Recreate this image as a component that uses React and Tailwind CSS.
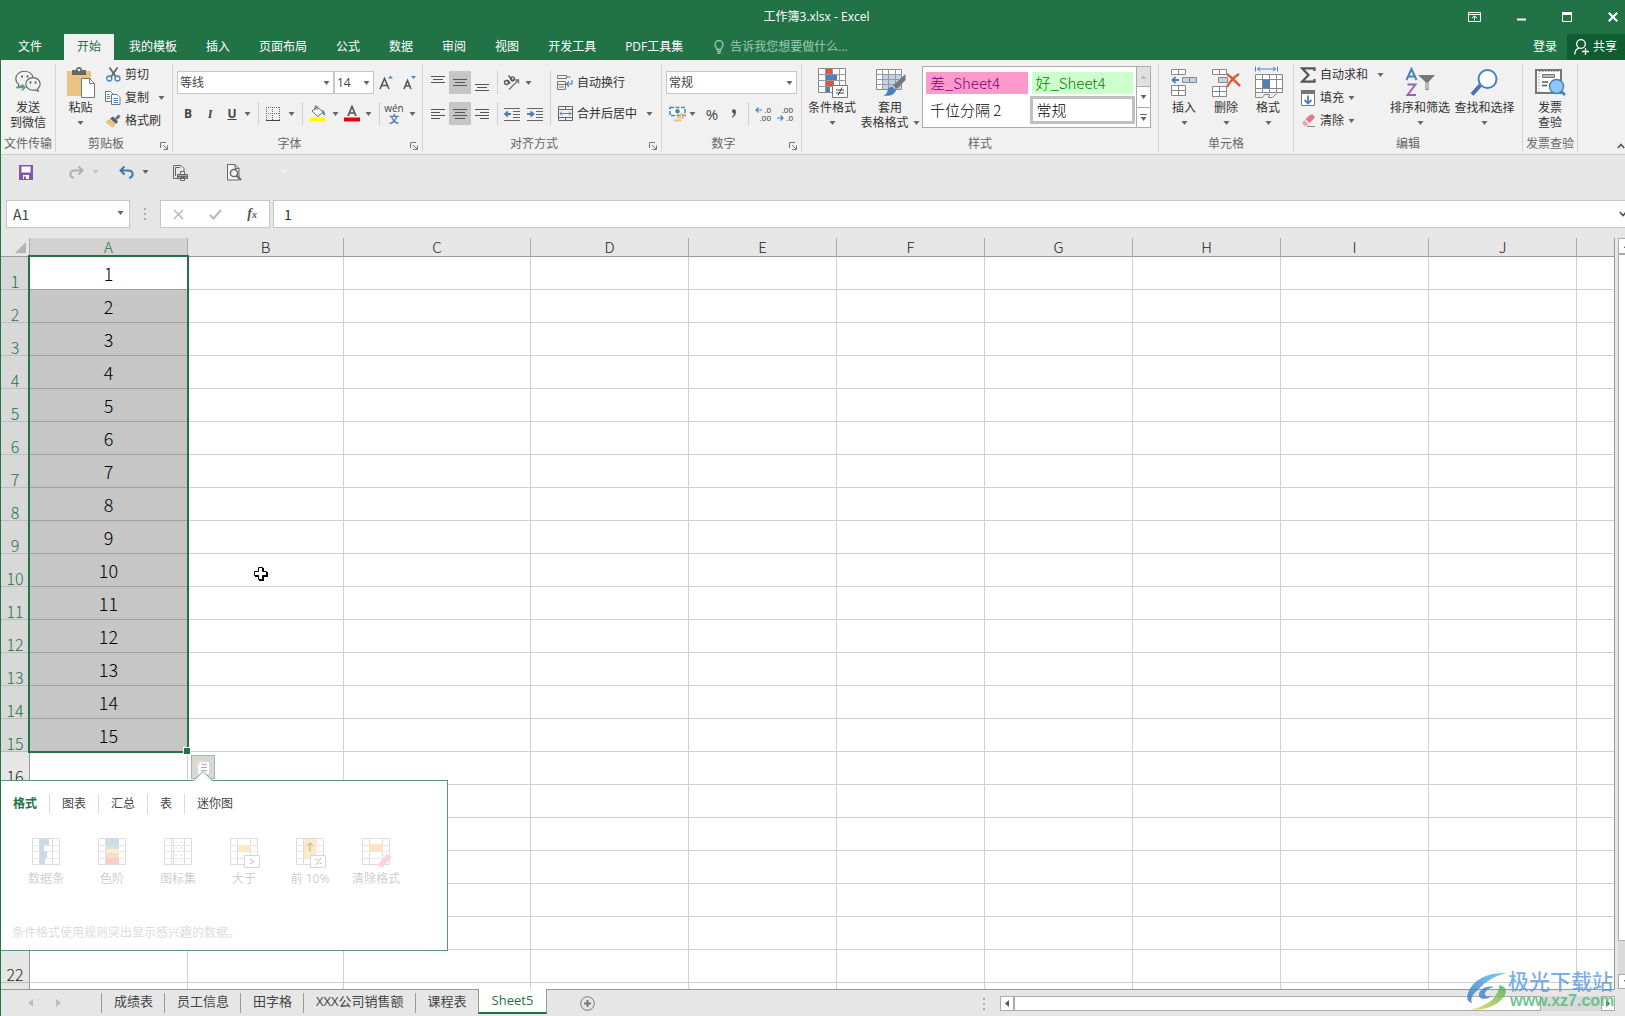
import React, { useState } from "react";

// ---------- DATA ----------

const MENU_TABS = ["我的模板", "插入", "页面布局", "公式", "数据", "审阅", "视图", "开发工具", "PDF工具集"];
const COLUMNS = [
  { name: "A", width: 158 },
  { name: "B", width: 156 },
  { name: "C", width: 187 },
  { name: "D", width: 158 },
  { name: "E", width: 148 },
  { name: "F", width: 148 },
  { name: "G", width: 148 },
  { name: "H", width: 148 },
  { name: "I", width: 148 },
  { name: "J", width: 148 },
  { name: "", width: null },
];
const ROWS = Array.from({ length: 23 }, (_, i) => i + 1);
const FILLED = 15;
const SHEETS = ["成绩表", "员工信息", "田字格", "XXX公司销售额", "课程表"];
const ANALYSIS_TABS = ["格式", "图表", "汇总", "表", "迷你图"];

// ---------- SMALL PARTS ----------

const Caret = ({ className = "" }) => (
  <svg width="7" height="4" viewBox="0 0 7 4" className={`shrink-0 ${className}`}>
    <path d="M0.5 0h6L3.5 4z" fill="currentColor" />
  </svg>
);

const Sep = () => <span className="h-[23px] w-px shrink-0 bg-[#d0d0d0]" />;

const Launcher = () => (
  <button aria-label="更多选项" className="flex h-4 w-4 items-center justify-center pt-1">
    <svg width="8" height="8" viewBox="0 0 8 8" fill="none" stroke="#777">
      <path d="M0.5 6V0.5H6M3 3l4 4M7.5 3.5v4h-4" />
    </svg>
  </button>
);

const Group = ({ label, width, launcher, children }) => (
  <section className={`flex shrink-0 flex-col border-r border-[#d4d4d4] ${width}`}>
    <div className="flex h-[72px] items-start">{children}</div>
    <div className="flex h-4 items-center">
      <span className="flex-1 text-center whitespace-nowrap text-[#666]">{label}</span>
      {launcher && <Launcher />}
    </div>
  </section>
);

const BigButton = ({ icon, lines, caret, width }) => (
  <button className={`flex shrink-0 flex-col items-center pt-[2px] leading-[15px] ${width}`}>
    <span className="mb-[2px] flex h-8 items-center justify-center">{icon}</span>
    <span className="whitespace-nowrap">{lines[0]}</span>
    <span className="flex h-[15px] items-center gap-1 whitespace-nowrap">
      {lines[1]}
      {caret && <Caret className="text-[#666]" />}
    </span>
  </button>
);

const SmallButton = ({ icon, label, caret, caretGap = "ml-1" }) => (
  <button className="flex h-[23px] items-center whitespace-nowrap">
    <span className="mr-1 flex w-4 justify-center">{icon}</span>
    {label}
    {caret && <Caret className={`text-[#666] ${caretGap}`} />}
  </button>
);

const Tool = ({ label, width = "w-[22px]", active, children }) => (
  <button
    aria-label={label}
    className={`flex h-[23px] shrink-0 items-center justify-center ${width} ${active ? "bg-[#c6c6c6]" : ""}`}
  >
    {children}
  </button>
);

const DropTool = ({ label }) => (
  <button aria-label={label} className="flex h-[23px] w-[9px] shrink-0 items-center justify-center text-[#666]">
    <Caret />
  </button>
);

const Picker = ({ label, value, width }) => (
  <label className={`relative block h-[23px] ${width}`}>
    <select
      aria-label={label}
      className="h-full w-full appearance-none border border-[#c6c6c6] bg-white px-[2px] text-[#444] outline-none"
    >
      <option>{value}</option>
    </select>
    <Caret className="pointer-events-none absolute top-[10px] right-1 text-[#666]" />
  </label>
);

// ---------- ICONS ----------

const WeChatIcon = () => (
  <svg width="26" height="24" viewBox="0 0 26 24" fill="none" stroke="#666" strokeWidth="1.1">
    <path d="M10 16.500c-1.500 0-2.500-.2-3.800-.6L3 17.500l.8-3C1.800 13 .8 11 .8 8.800.8 4.400 4.800 1.200 9.500 1.200c4.300 0 7.800 2.600 8.500 6.300" />
    <path d="M18 7.600c4 0 7.200 2.900 7.200 6.400 0 2-1 3.700-2.700 4.900l.6 2.400-2.700-1.400c-.8.200-1.600.3-2.400.3-4 0-7.200-2.800-7.200-6.200S14 7.600 18 7.600z" />
    <path d="M7 5.500v2M12.500 5.500v2M15.500 11.500v2M20.500 11.500v2" stroke="#444" strokeWidth="1.600" />
    <path d="M1 17.500h8.500M7 14.500l3 3-3 3" stroke="#4fa877" strokeWidth="1.400" />
  </svg>
);

const PasteIcon = () => (
  <svg width="30" height="32" viewBox="0 0 30 32">
    <path d="M1 5h24v25H1z" fill="#eac282" />
    <path d="M6 4h4c0-4 6-4 6 0h4v5H6z" fill="#666" />
    <circle cx="13" cy="4" r="1.300" fill="#f1f1f1" />
    <path d="M15.500 12.500h8l5 5v14h-13z" fill="#fff" stroke="#777" />
    <path d="M23.500 12.500v5h5" fill="none" stroke="#777" />
  </svg>
);

const CutIcon = () => (
  <svg width="15" height="15" viewBox="0 0 15 15" fill="none">
    <path d="M3.500 0.500L10 10M11.500 0.500L5 10" stroke="#666" strokeWidth="1.800" />
    <circle cx="3.300" cy="11.500" r="2.500" stroke="#4a80bd" strokeWidth="1.300" />
    <circle cx="11.500" cy="11.500" r="2.500" stroke="#4a80bd" strokeWidth="1.300" />
  </svg>
);

const CopyIcon = () => (
  <svg width="16" height="14" viewBox="0 0 16 14" fill="#fff" stroke="#777">
    <path d="M0.500 0.500h5l2.500 2.500v7.500h-7.500z" />
    <path d="M6.500 3.500h5.500l3 3v7h-8.500z" />
    <path d="M2 3.500h2.500M2 5.500h3M2 7.500h3M8.500 7.500h4.500M8.500 9.500h4.500M8.500 11.500h4.500" stroke="#4a80bd" />
  </svg>
);

const BrushIcon = () => (
  <svg width="16" height="14" viewBox="0 0 16 14">
    <path d="M0.500 7.500l4-2.500 6 5-2.500 3.500-2.500-1-.5-1.500-1 .5z" fill="#eac282" />
    <path d="M5 4.500l3-2 5 5-2 2.500z" fill="#5c5c6b" />
    <path d="M10 4l3.500-3.500 2 2L12 6z" fill="#6b6b78" />
  </svg>
);

const GrowIcon = ({ down }) => (
  <svg width="16" height="16" viewBox="0 0 16 16">
    <path d={down ? "M2 14L5.500 5.500 9 14M3 11h5" : "M1 14L5.500 3.500 10 14M2.500 10.500h6"} fill="none" stroke="#555" strokeWidth="1.600" />
    <path d={down ? "M9 1h5l-2.500 3z" : "M9 3.500h5L11.500 0.800z"} fill="#4a80bd" />
  </svg>
);

const BorderIcon = () => (
  <svg width="14" height="14" viewBox="0 0 14 14" fill="none" stroke="#666">
    <path d="M0 0.500h14M0 6.500h14M0.500 0v13M6.500 0v13M13.500 0v13" strokeDasharray="1 1" />
    <path d="M0 13.500h14" stroke="#444" />
  </svg>
);

const FillIcon = () => (
  <svg width="17" height="17" viewBox="0 0 17 17">
    <path d="M3 6l5-4 6 5-5 4.500z" fill="#fff" stroke="#666" />
    <path d="M6 5V1.500c0-1 2-1 2 0V5" fill="none" stroke="#666" />
    <path d="M13 5c3 1 3.500 4 2.500 6-1-1-1.500-2.500-2.500-3z" fill="#4a80bd" />
    <path d="M0.500 12.500h16v4h-16z" fill="#ff0" />
  </svg>
);

const FontColorIcon = () => (
  <svg width="16" height="17" viewBox="0 0 16 17">
    <path d="M4 11L8 1.500 12 11M5.200 8h5.600" fill="none" stroke="#555" strokeWidth="1.700" />
    <path d="M0 12.500h16v4H0z" fill="#e3000f" />
  </svg>
);

const LinesIcon = ({ rows }) => (
  <svg width="14" height="16" viewBox="0 0 14 16" stroke="#555">
    {rows.map(([x, y, w]) => (
      <path key={y} d={`M${x} ${y}.5h${w}`} />
    ))}
  </svg>
);

const OrientIcon = () => (
  <svg width="17" height="16" viewBox="0 0 17 16" fill="none" stroke="#555">
    <path d="M6 14.500L15.500 5M12 5h3.500v3.500" stroke="#777" strokeWidth="1.300" />
    <circle cx="3.500" cy="7.500" r="2" strokeWidth="1.400" />
    <path d="M4.300 5l3 3.500M5.500 0.500l4.500 5.500" strokeWidth="1.400" />
    <circle cx="9.500" cy="3.800" r="1.900" strokeWidth="1.400" />
  </svg>
);

const IndentIcon = ({ right }) => (
  <svg width="17" height="14" viewBox="0 0 17 14" fill="none" stroke="#666">
    <path d="M0 1.500h16M9 4.500h7M9 7.500h7M9 10.500h7M0 13.500h16" />
    <path d={right ? "M0 7h5M3.500 4.500L6.500 7 3.500 9.500" : "M2 7h5M4 4.500L1 7l3 2.500"} stroke="#4a80bd" strokeWidth="1.800" />
  </svg>
);

const WrapIcon = () => (
  <svg width="16" height="16" viewBox="0 0 16 16" fill="none" stroke="#777">
    <path d="M0.500 0.500h9v3h-9zM0.500 6.500h8v3h-8zM0.500 9.500h8v5h-8zM2 12h5M9.500 2h4" />
    <path d="M15 5v4H10M12 6.500L9.500 9l2.500 2.500" stroke="#4a80bd" strokeWidth="1.200" />
  </svg>
);

const MergeIcon = () => (
  <svg width="15" height="15" viewBox="0 0 15 15" fill="none" stroke="#666">
    <path d="M0.500 0.500h14v14h-14zM0.500 3.500h14M0.500 11.500h14M7.500 0.500v3M7.500 11.500v3" />
    <path d="M2 7.500h11M4 5.500l-2 2 2 2M11 5.500l2 2-2 2" stroke="#4a80bd" />
  </svg>
);

const MoneyIcon = () => (
  <svg width="17" height="16" viewBox="0 0 17 16">
    <path d="M1 1.500h15v8H1z" fill="#fff" stroke="#4a80bd" strokeWidth="1.500" strokeDasharray="4 1.500" />
    <circle cx="8.500" cy="5.300" r="2.200" fill="#4a80bd" />
    <path d="M9 7.500h7v2H9zM8 10.500h7v2H8zM5 13.500h7v2H5z" fill="#f0c075" />
  </svg>
);

const CommaIcon = () => (
  <svg width="6" height="9" viewBox="0 0 6 9">
    <path d="M1 1.800C1 .8 1.900.2 2.900.2 4.200.2 5 1.200 5 2.800 5 5.500 3.500 7.800 1 8.800L.7 8C2 7.200 2.800 6 2.900 4.500 1.800 4.500 1 3 1 1.800z" fill="#555" />
  </svg>
);

const DecimalIcon = ({ less }) => (
  <span className="relative block h-4 w-4 text-[8px] leading-[8px] text-[#333]">
    <span className="block text-right">{less ? ".00" : ".0"}</span>
    <span className="block text-right">{less ? ".0" : ".00"}</span>
    <svg width="7" height="6" viewBox="0 0 7 6" fill="none" stroke="#4a80bd" strokeWidth="1.200" className={`absolute left-0 ${less ? "bottom-px" : "top-px"}`}>
      <path d={less ? "M0 3h6M3.500 0.500L6 3 3.500 5.500" : "M7 3H1M3.500 0.500L1 3l2.500 2.500"} />
    </svg>
  </span>
);

const CondIcon = () => (
  <svg width="31" height="31" viewBox="0 0 31 31">
    <path d="M1.500 1.500h27v24h-27z" fill="#fff" stroke="#888" />
    <path d="M1.500 7.500h27M1.500 13.500h27M1.500 19.500h27M8.500 1.500v24M15.500 1.500v24M22.500 1.500v24" stroke="#999" fill="none" />
    <path d="M9 2h6v5H9zM9 14h8v5H9z" fill="#d9593a" />
    <path d="M9 8h11v5H9zM9 20h4v5H9z" fill="#4a80bd" />
    <path d="M15.500 18.500h15v12h-15z" fill="#fff" stroke="#777" />
    <path d="M19 23h8M19 26h8M25 20.500l-4 8" stroke="#444" fill="none" />
  </svg>
);

const TableStyleIcon = () => (
  <svg width="31" height="30" viewBox="0 0 31 30">
    <path d="M1.500 2.500h25v20h-25z" fill="#fff" stroke="#888" />
    <path d="M8 8h18v14H8z" fill="#bcd3ea" />
    <path d="M1.500 7.500h25M1.500 12.500h25M1.500 17.500h25M7.500 2.500v20M13.500 2.500v20M20.500 2.500v20" stroke="#999" fill="none" />
    <path d="M30.500 7v6L22 22l-4-3.500z" fill="#777" />
    <path d="M17 19.500l4 3.500c-1 5-7 6.500-12.500 5.500 3-1 3.500-3 4.500-6 1-2 2.500-3 4-3z" fill="#4a80bd" />
  </svg>
);

const InsertIcon = () => (
  <svg width="28" height="28" viewBox="0 0 28 28" fill="#fff" stroke="#888">
    <path d="M1.500 1.500h14v5h-14zM8.500 1.500v5M1.500 17.500h14v10h-14zM1.500 22.500h14M8.500 17.500v10" />
    <path d="M12.500 9.500h14v5h-14zM19.500 9.500v5" fill="#c0d5e4" />
    <path d="M9 12H3M5.500 9L2.500 12l3 3" fill="none" stroke="#4a80bd" strokeWidth="1.800" />
  </svg>
);

const DeleteIcon = () => (
  <svg width="30" height="29" viewBox="0 0 30 29" fill="#fff" stroke="#888">
    <path d="M1.500 1.500h14v5h-14zM8.500 1.500v5M1.500 18.500h14v10h-14zM1.500 23.500h14M8.500 18.500v10" />
    <path d="M7.500 9.500h9v5h-9z" fill="#c0d5e4" />
    <path d="M16 6c4 3 8 7 13 12M28 6c-5 3-9 7-12 13" fill="none" stroke="#d9593a" strokeWidth="2.400" />
  </svg>
);

const FormatIcon = () => (
  <svg width="29" height="32" viewBox="0 0 29 32" fill="none" stroke="#888">
    <path d="M1.500 8.500h27v18h-27z" fill="#fff" />
    <path d="M8.500 8.500v18M15.500 8.500v18M22.500 8.500v18M1.500 13.500h27M1.500 22.500h27M1.500 26.500v5h7l2-3h5l-1 3h4l4-4" />
    <path d="M9 14h7v8H9z" fill="#4a80bd" stroke="none" />
    <path d="M1.500 0.500v5M23.500 0.500v5M3 3h19M6 0.800L3.500 3 6 5.200M19 0.800L21.500 3 19 5.200" stroke="#4a80bd" />
  </svg>
);

const SumIcon = () => (
  <svg width="16" height="16" viewBox="0 0 16 16">
    <path d="M14.500 4V1.300H2l6.500 6.700L2 14.700h12.500V12" fill="none" stroke="#555" strokeWidth="2.200" />
  </svg>
);

const FillDownIcon = () => (
  <svg width="14" height="16" viewBox="0 0 14 16">
    <path d="M0.500 0.500h13v15H0.500z" fill="#fff" stroke="#777" />
    <path d="M0 0h14v4H0z" fill="#777" />
    <path d="M7 5.500v8M3.500 10L7 13.500 10.500 10" fill="none" stroke="#4a80bd" strokeWidth="1.800" />
  </svg>
);

const EraserIcon = () => (
  <svg width="15" height="13" viewBox="0 0 15 13">
    <path d="M1 8.500l2.500-2.500 4 4L5.500 12H3z" fill="#eba6ae" />
    <path d="M4.500 5L9.500 0.500h2l2 2v1.500L8.500 9z" fill="#e8768a" />
    <path d="M6 12.500h8" stroke="#888" />
  </svg>
);

const SortFilterIcon = () => (
  <svg width="31" height="30" viewBox="0 0 31 30" fill="none">
    <path d="M1.500 13L6.500 2l5 11M3 9.500h7" stroke="#4a80bd" strokeWidth="2" />
    <path d="M2.500 17.500h8L2.500 28h8.500" stroke="#9561b5" strokeWidth="1.900" />
    <path d="M13 8h17l-6.500 7v8h-3v-8z" fill="#777" />
    <path d="M21.500 15.500h1v6.500h-1z" fill="#fff" />
  </svg>
);

const FindIcon = () => (
  <svg width="30" height="29" viewBox="0 0 30 29">
    <path d="M10.500 17L2 26.500" stroke="#4a70b5" strokeWidth="4" />
    <circle cx="17.500" cy="11" r="9" fill="#fff" stroke="#4a80bd" strokeWidth="2" />
  </svg>
);

const InvoiceIcon = () => (
  <svg width="32" height="28" viewBox="0 0 32 28" fill="none">
    <path d="M2 2h25v23H2z" fill="#fff" stroke="#777" strokeWidth="2" />
    <path d="M5 5v19M5 3.500h20" stroke="#999" strokeDasharray="1.500 1.500" />
    <path d="M8.500 6.500h12v3h-12z" stroke="#777" fill="#bbb" />
    <path d="M8 14h6M8 17.500h5M18 13h4" stroke="#555" strokeWidth="1.300" />
    <circle cx="22.500" cy="18.500" r="7" fill="#8fc6fb" stroke="#4a80bd" strokeWidth="1.500" />
    <path d="M27 23l4 4" stroke="#4a80bd" strokeWidth="2.500" />
  </svg>
);

// ---------- TITLE + MENU ----------

const TitleBar = () => (
  <header className="bg-[#217346] text-white">
    <div className="flex h-[34px] items-center">
      <div className="w-[176px]" />
      <h1 className="flex-1 text-center">工作簿3.xlsx - Excel</h1>
      <div className="flex w-[168px] items-center justify-end gap-9 pr-[7px]">
        <button aria-label="功能区显示选项">
          <svg width="13" height="10" viewBox="0 0 13 10" fill="none" stroke="#fff">
            <path d="M0.500 0.500h12v9h-12zM0.500 2.500h12M6.500 8.500V4M4 6l2.500-2L9 6" />
          </svg>
        </button>
        <button aria-label="最小化">
          <svg width="9" height="10" viewBox="0 0 9 10"><path d="M0 6.500h9v2H0z" fill="#fff" /></svg>
        </button>
        <button aria-label="最大化">
          <svg width="10" height="10" viewBox="0 0 10 10"><path d="M0.500 1v8.500h9V1z" fill="none" stroke="#fff" /><path d="M0 0h10v3H0z" fill="#fff" /></svg>
        </button>
        <button aria-label="关闭">
          <svg width="10" height="10" viewBox="0 0 10 10"><path d="M0.800 0.800l8.400 8.400M9.200 0.800L0.800 9.200" stroke="#fff" strokeWidth="2" /></svg>
        </button>
      </div>
    </div>
    <nav className="flex h-[26px] items-stretch">
      <button className="w-[64px] pr-1 text-center">文件</button>
      <button className="mr-px bg-[#f1f1f1] px-[13px] text-[#217346]">开始</button>
      <div className="flex gap-px">
        {MENU_TABS.map((tab) => (
          <button key={tab} className="px-[14px] whitespace-nowrap">{tab}</button>
        ))}
      </div>
      <label className="ml-[17px] flex flex-1 items-center gap-[6px]">
        <svg width="10" height="14" viewBox="0 0 10 14" fill="none" stroke="#9fcab2" strokeWidth="1.300">
          <path d="M3 9.500C3 8 1 7 1 4.500a4 4 0 018 0C9 7 7 8 7 9.500zM3 11.500h4M3.500 13.300h3" />
        </svg>
        <input
          aria-label="告诉我"
          placeholder="告诉我您想要做什么..."
          className="w-40 bg-transparent text-white outline-none placeholder:text-[#9fcab2]"
        />
      </label>
      <button className="px-[10px]">登录</button>
      <button className="flex items-center gap-1 bg-[#0e5c2f] pr-2 pl-[7px]">
        <svg width="15" height="16" viewBox="0 0 15 16" fill="none" stroke="#fff" strokeWidth="1.300">
          <circle cx="7" cy="5" r="4.300" />
          <path d="M0.800 15.500c0-3.500 2-5.700 4.200-6.500M8 12.500h7M11.500 9v7" />
        </svg>
        共享
      </button>
    </nav>
  </header>
);

// ---------- RIBBON ----------

const Ribbon = () => (
  <div className="flex h-[95px] items-start overflow-hidden border-b border-[#cacaca] bg-[#f1f1f1] pt-1 text-[#333]">
    <Group label="文件传输" width="w-[55px]">
      <BigButton icon={<WeChatIcon />} lines={["发送", "到微信"]} width="w-full" />
    </Group>

    <Group label="剪贴板" width="w-[117px]" launcher>
      <BigButton icon={<PasteIcon />} lines={["粘贴"]} caret width="w-[49px]" />
      <div className="-mt-px flex flex-col items-start">
        <SmallButton icon={<CutIcon />} label="剪切" />
        <SmallButton icon={<CopyIcon />} label="复制" caret caretGap="ml-[9px]" />
        <SmallButton icon={<BrushIcon />} label="格式刷" />
      </div>
    </Group>

    <Group label="字体" width="w-[250px]" launcher>
      <div className="flex flex-col gap-2 pt-[7px] pl-1">
        <div className="flex items-center">
          <Picker label="字体" value="等线" width="w-[157px]" />
          <Picker label="字号" value="14" width="w-10" />
          <Tool label="增大字号" width="w-[26px]"><GrowIcon /></Tool>
          <Tool label="减小字号" width="w-[20px]"><GrowIcon down /></Tool>
        </div>
        <div className="flex items-center text-[#444]">
          <Tool label="加粗"><b>B</b></Tool>
          <Tool label="倾斜"><b className="font-serif italic">I</b></Tool>
          <Tool label="下划线"><b className="underline">U</b></Tool>
          <DropTool label="下划线样式" />
          <span className="w-[6px]" /><Sep />
          <Tool label="边框" width="w-[28px]"><BorderIcon /></Tool>
          <DropTool label="边框样式" />
          <span className="w-[6px]" /><Sep />
          <Tool label="填充颜色" width="w-[28px]"><FillIcon /></Tool>
          <DropTool label="填充颜色列表" />
          <Tool label="字体颜色" width="w-6"><FontColorIcon /></Tool>
          <DropTool label="字体颜色列表" />
          <span className="w-[6px]" /><Sep />
          <Tool label="拼音" width="w-[28px]">
            <span className="flex flex-col items-center">
              <span className="text-[10px] leading-[11px]">wén</span>
              <span className="text-[10px] leading-[11px] font-bold text-[#4a80bd]">文</span>
            </span>
          </Tool>
          <DropTool label="拼音选项" />
        </div>
      </div>
    </Group>

    <Group label="对齐方式" width="w-[239px]" launcher>
      <div className="flex pt-[7px] pl-1">
        <div className="flex flex-col gap-2">
          <div className="flex">
            <Tool label="顶端对齐"><LinesIcon rows={[[0, 1, 14], [2, 4, 10], [0, 7, 14]]} /></Tool>
            <Tool label="垂直居中" active><LinesIcon rows={[[0, 4, 14], [2, 7, 10], [0, 10, 14]]} /></Tool>
            <Tool label="底端对齐"><LinesIcon rows={[[0, 9, 14], [2, 12, 10], [0, 15, 14]]} /></Tool>
            <span className="w-1" /><Sep />
            <Tool label="方向" width="w-[26px]"><OrientIcon /></Tool>
            <DropTool label="方向选项" />
          </div>
          <div className="flex">
            <Tool label="左对齐"><LinesIcon rows={[[0, 3, 14], [0, 6, 9], [0, 9, 14], [0, 12, 9]]} /></Tool>
            <Tool label="居中" active><LinesIcon rows={[[0, 3, 14], [2, 6, 10], [0, 9, 14], [2, 12, 10]]} /></Tool>
            <Tool label="右对齐"><LinesIcon rows={[[0, 3, 14], [5, 6, 9], [0, 9, 14], [5, 12, 9]]} /></Tool>
            <span className="w-1" /><Sep />
            <Tool label="减少缩进量" width="w-[28px]"><IndentIcon /></Tool>
            <Tool label="增加缩进量" width="w-[18px]"><IndentIcon right /></Tool>
          </div>
        </div>
        <div className="ml-[6px] flex flex-col gap-2 border-l border-[#d0d0d0] pl-[6px]">
          <SmallButton icon={<WrapIcon />} label="自动换行" />
          <SmallButton icon={<MergeIcon />} label="合并后居中" caret caretGap="ml-[9px]" />
        </div>
      </div>
    </Group>

    <Group label="数字" width="w-[140px]" launcher>
      <div className="flex flex-col gap-2 pt-[7px] pl-1">
        <Picker label="数字格式" value="常规" width="w-[131px]" />
        <div className="flex text-[#444]">
          <Tool label="会计数字格式"><MoneyIcon /></Tool>
          <DropTool label="会计数字格式选项" />
          <span className="w-1" />
          <Tool label="百分比样式"><span className="text-[15px]">%</span></Tool>
          <Tool label="千位分隔样式"><CommaIcon /></Tool>
          <span className="w-[3px]" /><Sep />
          <Tool label="增加小数位数" width="w-[28px]"><DecimalIcon /></Tool>
          <Tool label="减少小数位数" width="w-4"><DecimalIcon less /></Tool>
        </div>
      </div>
    </Group>

    <Group label="样式" width="w-[357px]">
      <BigButton icon={<CondIcon />} lines={["条件格式"]} caret width="w-[60px]" />
      <BigButton icon={<TableStyleIcon />} lines={["套用", "表格格式"]} caret width="w-[56px]" />
      <div className="mt-[2px] ml-1 flex h-[62px] border border-[#ababab] bg-white text-[15px] leading-[22px] font-light [font-family:'Noto_Sans_CJK_SC',sans-serif]">
        <div className="grid w-[213px] grid-cols-2 content-center px-px">
          <button className="m-[2px] bg-[#ff99cc] px-1 text-left text-[#800080]">差_Sheet4</button>
          <button className="m-[2px] bg-[#ccffcc] px-1 text-left text-[#008000]">好_Sheet4</button>
          <button className="px-[6px] text-left text-black">千位分隔 2</button>
          <button className="border-[3px] border-[#c0c0c0] px-1 text-left text-black">常规</button>
        </div>
        <div className="flex w-[14px] flex-col divide-y divide-[#ababab] border-l border-[#ababab] text-[#666]">
          <button aria-label="上一行" className="flex flex-1 items-center justify-center bg-[#e1e1e1] text-[#bbb]"><Caret className="rotate-180" /></button>
          <button aria-label="下一行" className="flex flex-1 items-center justify-center"><Caret /></button>
          <button aria-label="其他样式" className="flex flex-1 flex-col items-center justify-center gap-[2px]">
            <span className="h-px w-[7px] bg-[#666]" />
            <Caret />
          </button>
        </div>
      </div>
    </Group>

    <Group label="单元格" width="w-[135px]">
      <div className="flex pl-1">
        <BigButton icon={<InsertIcon />} lines={["插入"]} caret width="w-[42px]" />
        <BigButton icon={<DeleteIcon />} lines={["删除"]} caret width="w-[42px]" />
        <BigButton icon={<FormatIcon />} lines={["格式"]} caret width="w-[42px]" />
      </div>
    </Group>

    <Group label="编辑" width="w-[229px]">
      <div className="-mt-px flex w-[94px] flex-col items-start pl-[6px]">
        <SmallButton icon={<SumIcon />} label="自动求和" caret caretGap="ml-[9px]" />
        <SmallButton icon={<FillDownIcon />} label="填充" caret />
        <SmallButton icon={<EraserIcon />} label="清除" caret />
      </div>
      <BigButton icon={<SortFilterIcon />} lines={["排序和筛选"]} caret width="w-[64px]" />
      <BigButton icon={<FindIcon />} lines={["查找和选择"]} caret width="w-[65px]" />
    </Group>

    <Group label="发票查验" width="w-[55px]">
      <BigButton icon={<InvoiceIcon />} lines={["发票", "查验"]} width="w-full" />
    </Group>

    <button aria-label="折叠功能区" className="ml-auto self-end pb-[5px]">
      <svg width="8" height="6" viewBox="0 0 8 6" fill="none" stroke="#555" strokeWidth="1.600">
        <path d="M0.800 5L4 1.500 7.200 5" />
      </svg>
    </button>
  </div>
);

// ---------- QUICK ACCESS + FORMULA BAR ----------

const QuickAccess = () => (
  <div className="flex h-[45px] items-center pb-[11px] pl-[18px]">
    <button aria-label="保存" className="mr-9">
      <svg width="14" height="15" viewBox="0 0 14 15">
        <path d="M0 0h14v15H0z" fill="#8557a8" />
        <path d="M2.500 1.500h9v6h-9zM4 10h6v4H4z" fill="#fff" />
        <path d="M5 11.500h2v2.500H5z" fill="#8557a8" />
      </svg>
    </button>
    <button aria-label="恢复" className="flex items-center gap-2 text-[#aaa]">
      <svg width="15" height="13" viewBox="0 0 15 13" fill="none" stroke="#b0b0b0" strokeWidth="2">
        <path d="M13 4.500H6C0 4.500 0 11 5 12M9.500 0.500l4 4-4 4" />
      </svg>
      <Caret className="text-[#c4c4c4]" />
    </button>
    <button aria-label="撤消" className="ml-5 flex items-center gap-2">
      <svg width="15" height="13" viewBox="0 0 15 13" fill="none" stroke="#4378ad" strokeWidth="2">
        <path d="M2 4.500h7c6 0 6 6.500 1 7.500M5.500 0.500l-4 4 4 4" />
      </svg>
      <Caret className="text-[#666]" />
    </button>
    <button aria-label="快速打印" className="ml-[23px]">
      <svg width="17" height="17" viewBox="0 0 17 17" fill="none" stroke="#666">
        <path d="M6 14.500H1.500V1.500H9l3 3V7M3.500 12V3.500H8" />
        <path d="M8.500 7.500h4v3h-4zM5.500 10.500h10v4h-10zM8.500 13.500h4v3h-4z" fill="#eee" />
        <path d="M6 11.500h10v2H6z" fill="#666" stroke="none" />
      </svg>
    </button>
    <button aria-label="打印预览" className="ml-[38px]">
      <svg width="15" height="17" viewBox="0 0 15 17" fill="none" stroke="#666">
        <path d="M0.500 0.500H8l4 4v11.500H0.500zM8 0.500v4h4" fill="#f5f5f5" />
        <circle cx="7" cy="9" r="3.600" fill="#f5f5f5" strokeWidth="1.500" />
        <path d="M9.500 11.500L14 16" strokeWidth="2" />
      </svg>
    </button>
    <Caret className="ml-[39px] text-[#f0f0f0]" />
  </div>
);

const FormulaBar = () => (
  <div className="flex h-7 items-stretch pl-[5px] text-sm">
    <label className="relative w-[124px]">
      <input aria-label="名称框" defaultValue="A1" className="h-full w-full border border-[#c6c6c6] bg-white pb-px pl-[6px] text-[#444] outline-none [font-family:'Noto_Sans_CJK_SC',sans-serif]" />
      <Caret className="pointer-events-none absolute top-[11px] right-[6px] text-[#666]" />
    </label>
    <span className="flex w-[30px] flex-col items-center justify-center gap-[3px]">
      <span className="h-[2px] w-[2px] bg-[#aaa]" />
      <span className="h-[2px] w-[2px] bg-[#aaa]" />
      <span className="h-[2px] w-[2px] bg-[#aaa]" />
    </span>
    <div className="flex w-[110px] items-center justify-between border border-[#c6c6c6] bg-white pr-3 pl-3">
      <button aria-label="取消">
        <svg width="11" height="11" viewBox="0 0 11 11"><path d="M1 1l9 9M10 1l-9 9" stroke="#b8b8b8" strokeWidth="1.500" /></svg>
      </button>
      <button aria-label="输入">
        <svg width="13" height="11" viewBox="0 0 13 11"><path d="M1 6l3.500 3.500L12 1" fill="none" stroke="#b8b8b8" strokeWidth="2" /></svg>
      </button>
      <button aria-label="插入函数" className="font-['Liberation_Serif'] font-bold text-[#555] italic">
        f<span className="text-[10px]">x</span>
      </button>
    </div>
    <label className="relative ml-[3px] flex-1">
      <input aria-label="编辑栏" defaultValue="1" className="h-full w-full border border-r-0 border-[#c6c6c6] bg-white pb-px pl-[10px] text-[#333] outline-none [font-family:'Noto_Sans_CJK_SC',sans-serif]" />
      <svg width="8" height="6" viewBox="0 0 8 6" fill="none" stroke="#555" strokeWidth="1.800" className="absolute top-[11px] right-[-2px]">
        <path d="M0.800 1L4 4.500 7.200 1" />
      </svg>
    </label>
  </div>
);

// ---------- QUICK ANALYSIS POPUP ----------

const MiniGrid = ({ children }) => (
  <svg width="32" height="31" viewBox="0 0 32 31" fill="none">
    <path d="M2.500 1.500h27v26h-27zM9.500 1.500v26M22.500 1.500v26" stroke="#dcdcdc" />
    <path d="M2.500 8.500h27M2.500 14.500h27M2.500 21.500h27" stroke="#e8e8e8" />
    {children}
  </svg>
);

const ANALYSIS_ITEMS = [
  {
    label: "数据条",
    icon: <MiniGrid><path d="M10 2h9v6h-9zM10 8h4v6h-4zM10 14h7v7h-7zM10 21h5v6h-5z" fill="#ccd9ec" /></MiniGrid>,
  },
  {
    label: "色阶",
    icon: (
      <MiniGrid>
        <path d="M10 2h13v6H10z" fill="#cbdcec" />
        <path d="M10 8h13v4H10z" fill="#d0e4dc" />
        <path d="M10 12h13v4H10z" fill="#fbeecb" />
        <path d="M10 16h13v5H10z" fill="#fbdcc4" />
        <path d="M10 21h13v6H10z" fill="#f7cfc8" />
      </MiniGrid>
    ),
  },
  {
    label: "图标集",
    icon: <MiniGrid><path d="M11.500 1v27M13 5h2M18 5h3M13 11h2M18 11h3M13 18h2M18 18h3M13 24h2M18 24h3" stroke="#dcdcdc" /></MiniGrid>,
  },
  {
    label: "大于",
    icon: (
      <MiniGrid>
        <path d="M10 8h13v6H10z" fill="#fbebc0" />
        <path d="M16.500 18.500h15v12h-15z" fill="#fff" stroke="#d6d6d6" />
        <path d="M22 22l4 2.500-4 2.500" stroke="#bbb" />
      </MiniGrid>
    ),
  },
  {
    label: "前 10%",
    icon: (
      <MiniGrid>
        <path d="M10 2h13v19H10z" fill="#fdeacb" />
        <path d="M16 15V6M13 9l3-3 3 3" stroke="#d5bfa4" strokeWidth="1.500" />
        <path d="M16.500 18.500h15v12h-15z" fill="#fff" stroke="#d6d6d6" />
        <path d="M27 21l-5 7M21.500 22.500h2M25.500 26.500h2" stroke="#bbb" />
      </MiniGrid>
    ),
  },
  {
    label: "清除格式",
    icon: (
      <MiniGrid>
        <path d="M9 7h14v7H9z" fill="#fde3c4" />
        <path d="M18 27l9-10 5 3-9 10h-4z" fill="#fad3dc" />
      </MiniGrid>
    ),
  },
];

const QuickAnalysis = () => {
  const [tab, setTab] = useState("格式");
  return (
    <div className="absolute top-[542px] left-0 h-[171px] w-[447px] border border-l-0 border-[#5f917a] bg-white">
      <button aria-label="快速分析" className="absolute top-[-26px] left-[190px] flex h-6 w-6 items-center justify-center border border-[#9dbcac] bg-[#d5d8d3]">
        <svg width="16" height="16" viewBox="0 0 16 16">
          <path d="M0 1h8v8H0z" fill="#eadccb" />
          <path d="M5 3h9v12H3V6z" fill="#fbfbfb" />
          <path d="M7 5.500h5M6 8.500h6M6 11.500h6" stroke="#aab0bd" />
        </svg>
      </button>
      <svg width="20" height="11" viewBox="0 0 20 11" className="absolute top-[-10px] left-[192px]">
        <path d="M0 10.500L10 0.700l10 9.800z" fill="#fff" />
        <path d="M0 9.800L10 0.700l10 9.100" fill="none" stroke="#7fa795" />
      </svg>
      <div className="flex pt-[13px]">
        {ANALYSIS_TABS.map((name, i) => (
          <button
            key={name}
            onClick={() => setTab(name)}
            className={`h-5 px-3 leading-5 ${i < ANALYSIS_TABS.length - 1 ? "border-r border-[#dadada]" : ""} ${tab === name ? "font-bold text-[#217346]" : "text-[#444]"}`}
          >
            {name}
          </button>
        ))}
      </div>
      <div className="flex pt-[23px] pl-3">
        {ANALYSIS_ITEMS.map((item) => (
          <button key={item.label} className="flex w-[66px] flex-col items-center gap-[3px] whitespace-nowrap text-[#cfcfcf]">
            {item.icon}
            <span className="leading-4">{item.label}</span>
          </button>
        ))}
      </div>
      <p className="pt-[38px] pl-[11px] leading-4 text-[#dcdcdc]">条件格式使用规则突出显示感兴趣的数据。</p>
    </div>
  );
};

// ---------- SHEET ----------

const Sheet = () => (
  <div className="relative min-h-0 flex-1 overflow-hidden border-r border-[#999] font-light [font-family:'Noto_Sans_CJK_SC',sans-serif]">
    <table className="w-full table-fixed border-separate border-spacing-0 bg-white">
      <colgroup>
        <col className="w-[29px]" />
        {COLUMNS.map((c, i) => (
          <col key={i} style={c.width ? { width: c.width } : undefined} />
        ))}
      </colgroup>
      <thead>
        <tr className="h-[19px] text-[15px] leading-[18px] text-[#222]">
          <th className="border-r border-b border-r-[#ababab] border-b-[#999] bg-[#e6e6e6] p-0">
            <svg width="11" height="11" viewBox="0 0 11 11" className="mr-[3px] ml-auto">
              <path d="M11 0v11H0z" fill="#b4b4b4" />
            </svg>
          </th>
          {COLUMNS.map((c, i) => (
            <th
              key={i}
              className={`border-b border-b-[#999] p-0 font-light ${c.name ? "border-r border-r-[#ababab]" : ""} ${i === 0 ? "bg-[#d2d2d2] text-[#217346]" : "bg-[#e6e6e6]"}`}
            >
              {c.name}
            </th>
          ))}
        </tr>
      </thead>
      <tbody>
        {ROWS.map((n) => (
          <tr key={n} className="h-[33px]">
            <th
              className={`border-r border-b border-r-[#999] border-b-[#bdbdbd] p-0 align-bottom text-base leading-4 font-light ${n <= FILLED ? "bg-[#d8d8d8] text-[#217346]" : "bg-[#e6e6e6] text-[#222]"}`}
            >
              {n}
            </th>
            {COLUMNS.map((c, i) => (
              <td
                key={i}
                className={`border-b p-0 text-center text-lg leading-6 text-black ${c.name ? "border-r" : ""} ${i === 0 && n <= FILLED ? "border-r-[#d0d0d0] border-b-[#a0a0a0]" : "border-[#d0d0d0]"} ${i === 0 && n > 1 && n <= FILLED ? "bg-[#c6c6c6]" : ""}`}
              >
                {i === 0 && n <= FILLED ? n : ""}
              </td>
            ))}
          </tr>
        ))}
      </tbody>
    </table>

    {/* Selection frame with its fill handle */}
    <div className="pointer-events-none absolute top-[17px] left-[27px] h-[498px] w-[161px] border-2 border-[#217346]">
      <span className="absolute right-[-4px] bottom-[-4px] box-content h-[6px] w-[6px] border border-white bg-[#217346]" />
    </div>

    <svg width="16" height="16" viewBox="0 0 16 16" className="pointer-events-none absolute top-[328px] left-[252px]">
      <path d="M6 2h5v4h4v5h-4v4H6v-4H2V6h4z" fill="#000" />
      <path d="M5.500 1.500h4v4h4v4h-4v4h-4v-4h-4v-4h4z" fill="#fff" stroke="#000" />
    </svg>

    <div className="font-normal [font-family:'Open_Sans','Noto_Sans_CJK_SC',sans-serif]">
      <QuickAnalysis />
    </div>
  </div>
);

const VerticalScroll = () => (
  <div className="flex w-[10px] shrink-0 overflow-hidden pl-[3px]">
    <div className="flex w-[17px] shrink-0 flex-col bg-[#dadada]">
      <button aria-label="向上滚动" className="flex h-4 items-center border border-[#ababab] bg-white pl-1 text-[#666]"><Caret className="rotate-180" /></button>
      <div className="h-[687px] border border-[#ababab] bg-white" />
      <button aria-label="向下滚动" className="mt-auto flex h-[15px] items-center border border-[#ababab] bg-white pl-1 text-[#666]"><Caret /></button>
    </div>
  </div>
);

// ---------- SHEET TABS ----------

const SheetTabs = () => (
  <footer className="flex h-[27px] items-start text-[13px] text-[#444]">
    <div className="flex h-full flex-1 items-start border-t border-[#999]">
      <div className="flex h-[26px] w-[100px] items-center gap-[23px] pl-[27px]">
        <button aria-label="上一张"><svg width="5" height="8" viewBox="0 0 5 8"><path d="M5 0v8L0 4z" fill="#bdbdbd" /></svg></button>
        <button aria-label="下一张"><svg width="5" height="8" viewBox="0 0 5 8"><path d="M0 0v8l5-4z" fill="#bdbdbd" /></svg></button>
      </div>
      <div className="flex pt-[3px]">
        <span className="h-5 w-px bg-[#999]" />
        {SHEETS.map((name, i) => (
          <button key={name} className={`h-5 pr-[11px] pl-3 leading-4 whitespace-nowrap ${i < SHEETS.length - 1 ? "border-r border-[#999]" : ""}`}>
            <span className="block h-full">{name}</span>
          </button>
        ))}
      </div>
      <button className="-mt-px h-[25px] border-r border-b-2 border-l border-r-[#999] border-b-[#217346] border-l-[#999] bg-white px-[13px] text-[#217346]">Sheet5</button>
      <button aria-label="新工作表" className="mt-[6px] ml-[33px]">
        <svg width="15" height="15" viewBox="0 0 15 15" fill="none" stroke="#777">
          <circle cx="7.500" cy="7.500" r="6.800" />
          <path d="M7.500 4v7M4 7.500h7" strokeWidth="2" />
        </svg>
      </button>
      <span className="mt-2 mr-[15px] ml-auto flex flex-col gap-[3px]">
        <span className="h-[2px] w-[2px] bg-[#aaa]" />
        <span className="h-[2px] w-[2px] bg-[#aaa]" />
        <span className="h-[2px] w-[2px] bg-[#aaa]" />
      </span>
      <div className="mt-[6px] flex h-[15px] w-[615px] bg-[#dadada] text-[#555]">
        <button aria-label="向左滚动" className="flex w-[14px] items-center justify-center border border-[#ababab] bg-white"><svg width="4" height="7" viewBox="0 0 4 7"><path d="M4 0v7L0 3.500z" fill="currentColor" /></svg></button>
        <div className="w-[527px] border border-[#ababab] bg-white" />
        <button aria-label="向右滚动" className="ml-auto flex w-[14px] items-center justify-center border border-[#ababab] bg-white"><svg width="4" height="7" viewBox="0 0 4 7"><path d="M0 0v7l4-3.500z" fill="currentColor" /></svg></button>
      </div>
    </div>
    <div className="w-[10px]" />
  </footer>
);

const Watermark = () => (
  <div className="pointer-events-none absolute right-[11px] bottom-[6px] flex items-end opacity-80">
    <svg width="42" height="38" viewBox="0 0 42 38">
      <defs>
        <linearGradient id="swirlTop" x1="0" y1="1" x2="1" y2="0">
          <stop offset="0" stopColor="#2f6fc0" />
          <stop offset="1" stopColor="#5bc3f2" />
        </linearGradient>
        <linearGradient id="swirlBottom" x1="0" y1="1" x2="1" y2="0">
          <stop offset="0" stopColor="#e6d94a" />
          <stop offset="1" stopColor="#3fae55" />
        </linearGradient>
      </defs>
      <path d="M41 1C22 0 7 7 2 21c-2 6 0 9 4 10-2-5 1-9 6-13C18 11 27 4 41 1z" fill="url(#swirlTop)" />
      <path d="M33 13c8 1 9 8 3 14-7 8-18 11-32 11 12-3 22-8 26-15 2-4 4-7 3-10z" fill="url(#swirlBottom)" />
      <path d="M28 15c-9-2-16 4-15 9 1 4 9 4 12 0-4 1-7 0-6-3 1-3 5-5 9-6z" fill="#3f83cc" />
    </svg>
    <div className="w-[106px]">
      <p className="text-[21px] leading-6 font-medium whitespace-nowrap text-[#5d9be0] [font-family:'Noto_Sans_CJK_SC',sans-serif]">极光下载站</p>
      <p className="pl-[2px] font-['Liberation_Sans'] text-base leading-[18px] font-bold text-[#55b878]">www.xz7.com</p>
    </div>
  </div>
);

// ---------- MAIN COMPONENT ----------

const App = () => (
  <div className="relative flex h-screen flex-col overflow-hidden bg-[#e6e6e6] text-xs [font-family:'Open_Sans','Noto_Sans_CJK_SC',sans-serif]">
    <TitleBar />
    <main className="flex min-h-0 flex-1 flex-col border-l border-[#217346]">
      <Ribbon />
      <QuickAccess />
      <FormulaBar />
      <div className="mt-[10px] flex min-h-0 flex-1">
        <Sheet />
        <VerticalScroll />
      </div>
      <SheetTabs />
    </main>
    <Watermark />
  </div>
);

export default App;
